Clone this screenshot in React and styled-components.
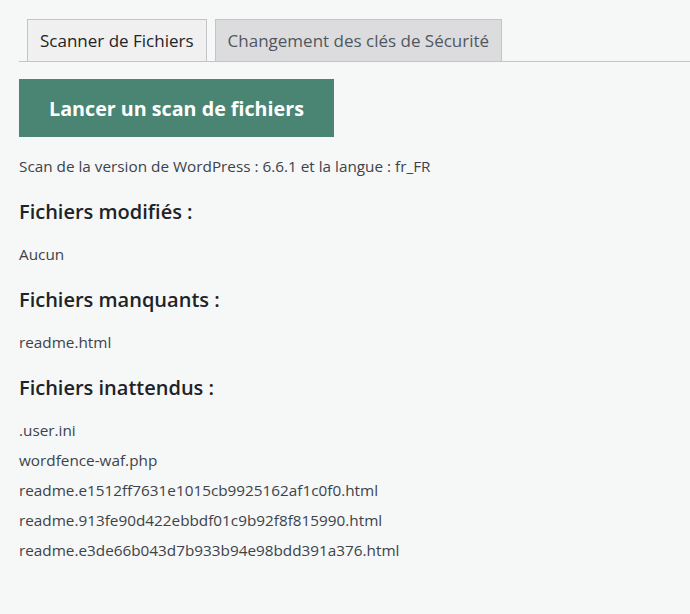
import React from "react";
import styled, { createGlobalStyle } from "styled-components";

const Global = createGlobalStyle`
  html, body { margin: 0; padding: 0; background: #f6f7f7; }
  body { font-family: "Open Sans", "Noto Sans", sans-serif; color: #3c434a; }
`;

const Page = styled.div`
  padding: 19px 0 0 19px;
  min-height: 614px;
  box-sizing: border-box;
`;

const TabBar = styled.nav`
  display: flex;
  gap: 8px;
  padding-left: 8px;
  border-bottom: 1px solid #c3c4c7;
  height: 43px;
  box-sizing: border-box;
`;

const Tab = styled.a`
  display: flex;
  align-items: center;
  padding: 0 12px;
  border: 1px solid #c3c4c7;
  border-bottom: none;
  background: ${p => (p.$active ? "#f0f0f1" : "#dcdcde")};
  color: ${p => (p.$active ? "#1d2327" : "#50575e")};
  font-size: 17px;
  text-decoration: none;
`;

const ScanButton = styled.button`
  margin-top: 17px;
  width: 315px;
  height: 58px;
  border: none;
  background: #4a8573;
  color: #fff;
  font-family: inherit;
  font-weight: 700;
  font-size: 19.7px;
  cursor: pointer;
`;

const Info = styled.p`
  margin: 17px 0 0;
  font-size: 15.3px;
  line-height: 24px;
`;

const Heading = styled.h3`
  margin: 20px 0 0;
  font-size: 20px;
  font-weight: 600;
  color: #1d2327;
  line-height: 28px;
`;

const List = styled.ul`
  list-style: none;
  margin: 16px 0 0;
  padding: 0;
  display: flex;
  flex-direction: column;
  gap: 6px;
`;

const Item = styled.li`
  font-size: 15.3px;
  line-height: 24px;
`;

const sections = [
  { title: "Fichiers modifiés :", items: ["Aucun"] },
  { title: "Fichiers manquants :", items: ["readme.html"] },
  {
    title: "Fichiers inattendus :",
    items: [
      ".user.ini",
      "wordfence-waf.php",
      "readme.e1512ff7631e1015cb9925162af1c0f0.html",
      "readme.913fe90d422ebbdf01c9b92f8f815990.html",
      "readme.e3de66b043d7b933b94e98bdd391a376.html",
    ],
  },
];

export default function App() {
  return (
    <>
      <Global />
      <Page>
        <TabBar>
          <Tab $active>Scanner de Fichiers</Tab>
          <Tab>Changement des clés de Sécurité</Tab>
        </TabBar>
        <ScanButton>Lancer un scan de fichiers</ScanButton>
        <Info>Scan de la version de WordPress : 6.6.1 et la langue : fr_FR</Info>
        {sections.map(s => (
          <section key={s.title}>
            <Heading>{s.title}</Heading>
            <List>
              {s.items.map(it => (
                <Item key={it}>{it}</Item>
              ))}
            </List>
          </section>
        ))}
      </Page>
    </>
  );
}
